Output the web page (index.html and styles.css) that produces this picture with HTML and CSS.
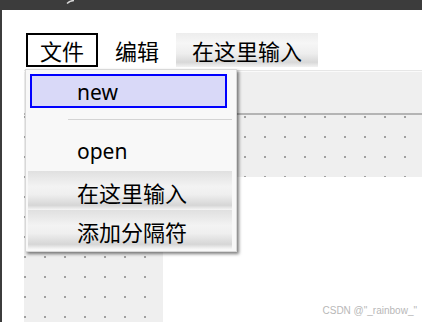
FILE: index.html
```html
<!DOCTYPE html>
<html lang="zh-CN">
<head>
    <meta charset="UTF-8">
    <meta name="viewport" content="width=device-width, initial-scale=1.0">
    <title>菜单栏</title>
    <link rel="stylesheet" href="styles.css">
</head>
<body>
    <div class="titlebar">
        <svg class="title_mark" width="10" height="4" viewBox="0 0 10 4"><path d="M1 3.5 Q4 0.5 8 0.5" stroke="#d8d8d8" stroke-width="1.4" fill="none"/></svg>
    </div>
    <div class="window">
        <div class="menubar">
            <span class="menu_item active">文件</span>
            <span class="menu_item">编辑</span>
            <span class="menu_item type_here">在这里输入</span>
        </div>
        <div class="form">
            <div class="toolbar"></div>
            <div class="grid"></div>
            <div class="grid lower"></div>
        </div>
    </div>

    <!-- 文件 菜单展开 -->
    <ul class="dropdown">
        <li class="drop_item editing latin">new</li>
        <li class="separator"></li>
        <li class="drop_item latin open">open</li>
        <li class="drop_item shaded">在这里输入</li>
        <li class="drop_item shaded">添加分隔符</li>
    </ul>

    <div class="watermark">CSDN @"_rainbow_"</div>
</body>
</html>
```

FILE: styles.css
```css
*{
    margin:0;
    padding:0;
    box-sizing: border-box;
}
body{
    position: relative;
    width: 422px;
    height: 322px;
    overflow: hidden;
    background-color: white;
    font-family: "Noto Sans", "Noto Sans CJK SC", sans-serif;
    font-size: 22px;
    color: black;
}
.titlebar{
    position: relative;
    height: 10px;
    background-color: #3c3c3c;
}
.title_mark{
    position: absolute;
    left: 66px;
    top: 0;
}
.window{
    height: 312px;
    border-left: 2px solid #3c3c3c;
    padding-top: 23px;
    display: flex;
    flex-direction: column;
}
.menubar{
    display: flex;
    margin-left: 24px;
    height: 34px;
}
.menu_item{
    height: 34px;
    line-height: 36px;
    padding: 0 17px;
    white-space: nowrap;
}
.menu_item.active{
    border: 2px solid black;
    padding: 0 12px;
    line-height: 32px;
}
.type_here{
    padding: 0 16px;
    background: linear-gradient(#ededed, #f6f6f6 30%, #eeeeee 60%, #d8d8d8 86%, #f2f2f2);
}
.form{
    flex: 1;
    margin-top: 3px;
    margin-left: 22px;
    display: flex;
    flex-direction: column;
}
.toolbar{
    height: 45px;
    background-color: #efefef;
    border-top: 1px solid #e6e6e6;
    border-bottom: 2px solid #b4b4b4;
    box-shadow: inset 0 1px #fafafa;
}
.grid{
    height: 62px;
    background-color: #efefef;
    background-image: conic-gradient(at 2px 2px, transparent 75%, #a0a0a0 0);
    background-size: 20px 20px;
    background-position: 0 1px;
}
.grid.lower{
    flex: 1;
    width: 139px;
    background-position: 0 19px;
}
.dropdown{
    position: absolute;
    left: 25px;
    top: 69px;
    width: 212px;
    height: 183px;
    list-style-type: none;
    background-color: #f8f8f8;
    border: 1px solid #d8d8d8;
    box-shadow: 2px 2px 3px rgba(0,0,0,0.5);
    padding: 4px 4px 2px 2px;
    display: flex;
    flex-direction: column;
}
.drop_item{
    padding-left: 49px;
    white-space: nowrap;
}
.latin{
    font-size: 21px;
}
.drop_item.editing{
    height: 34px;
    line-height: 33px;
    margin: 0 5px 0 2px;
    padding-left: 45px;
    border: 2px solid #0000ff;
    background-color: #d9d9f8;
}
.separator{
    height: 1px;
    margin: 11px 0 14px 40px;
    background-color: #d4d4d4;
}
.drop_item.open{
    height: 37px;
    line-height: 34px;
}
.shaded{
    height: 39px;
    line-height: 44px;
    background: linear-gradient(#e0e0e0, #f3f3f3 40%, #efefef 60%, #d6d6d6 88%, #f6f6f6);
}
.watermark{
    position: absolute;
    right: 5px;
    bottom: 6px;
    font-family: "Liberation Sans", Arial, sans-serif;
    font-size: 10px;
    color: #b8b8b8;
}
```
